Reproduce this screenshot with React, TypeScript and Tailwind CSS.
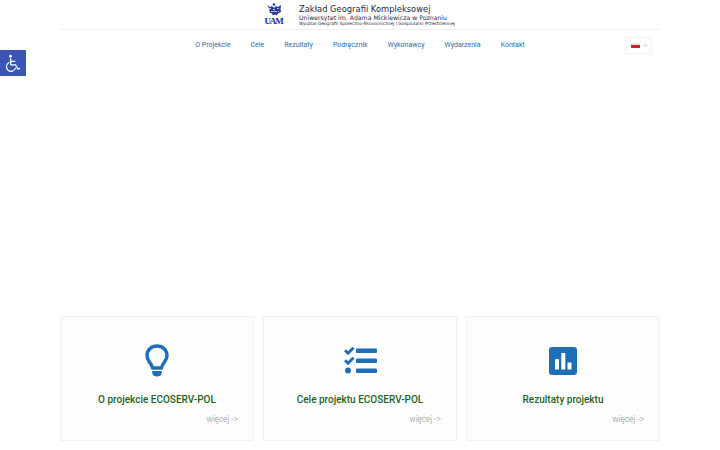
import { ChevronDown } from "lucide-react"

const navItems = ["O Projekcie", "Cele", "Rezultaty", "Podręcznik", "Wykonawcy", "Wydarzenia", "Kontakt"]

function WheelchairIcon() {
  return (
    <svg width="16" height="18" viewBox="0 0 18 20" fill="none" stroke="#fff" strokeWidth="1.400" strokeLinecap="round" strokeLinejoin="round">
      <circle cx="6.200" cy="2.300" r="1.600" fill="#fff" stroke="none" />
      <path d="M6.400 5v7h5.400l2.800 5 2-.9" />
      <path d="M6.400 8.300h4.600" />
      <path d="M4.500 9.500a5.200 5.200 0 1 0 7.300 6.300" />
    </svg>
  )
}

function BulbIcon() {
  return (
    <svg width="24" height="33" viewBox="0 0 24 33" fill="none">
      <path
        d="M12 2C6.200 2 2 6.300 2 11.600c0 2.400.9 4.300 2.200 6 1.500 2 2.800 3.900 3.400 6.400h8.800c.6-2.500 1.900-4.400 3.400-6.400 1.300-1.700 2.200-3.600 2.200-6C22 6.300 17.800 2 12 2z"
        stroke="#1f6fb8"
        strokeWidth="3.400"
        strokeLinejoin="round"
      />
      <path d="M7.200 27h9.600v1.500c0 2.500-2 4-4.800 4s-4.800-1.500-4.800-4z" fill="#1f6fb8" />
    </svg>
  )
}

function ListIcon() {
  return (
    <svg width="33" height="28" viewBox="0 1 33 28" fill="#1f6fb8">
      <path d="M1 4.200l3 3 5.500-5.500" fill="none" stroke="#1f6fb8" strokeWidth="3" />
      <path d="M1 14.200l3 3 5.500-5.500" fill="none" stroke="#1f6fb8" strokeWidth="3" />
      <circle cx="4" cy="24.500" r="3" />
      <rect x="12" y="2.500" width="21" height="4.400" rx="1" />
      <rect x="12" y="12.500" width="21" height="4.400" rx="1" />
      <rect x="12" y="22.500" width="21" height="4.400" rx="1" />
    </svg>
  )
}

function ChartIcon() {
  return (
    <svg width="28" height="28" viewBox="0 0 28 28">
      <rect width="28" height="28" rx="3" fill="#1f6fb8" />
      <rect x="6" y="12" width="4" height="10.500" rx="0.600" fill="#fff" />
      <rect x="12.300" y="6" width="4" height="16.500" rx="0.600" fill="#fff" />
      <rect x="18.500" y="15.500" width="4" height="7" rx="0.600" fill="#fff" />
    </svg>
  )
}

function UamLogo() {
  return (
    <div className="flex w-[17px] flex-col items-center">
      <svg width="16" height="14" viewBox="0 0 16 14">
        <g fill="#2c3a98">
          <circle cx="8" cy="1.500" r="1.300" />
          <path d="M1 2l3 2 2-1 2 2 2-2 2 1 3-2-.5 4 .5 3-3 1.500-1 2-2-1-2 1-1-2-3-1.500.5-3z" />
        </g>
        <g fill="#b7c0e6">
          <rect x="3" y="5" width="2" height="1" />
          <rect x="7" y="6" width="2" height="1" />
          <rect x="11" y="5" width="2" height="1" />
          <rect x="5" y="8" width="6" height="1" />
          <rect x="3" y="8" width="1" height="1" />
          <rect x="12" y="8" width="1" height="1" />
        </g>
      </svg>
      <span className="font-['Liberation_Serif',serif] text-[9px] leading-[9px] font-bold tracking-[-1.200px] text-[#1e2a7c]">UAM</span>
    </div>
  )
}

function Card({ icon, title }: { icon: React.ReactNode; title: string }) {
  return (
    <div className="flex h-[125px] flex-col items-center border border-[#f1f1f1] bg-[#fdfdfd] px-2.5 pt-[27px]">
      <div className="flex h-[33px] items-center justify-center">{icon}</div>
      <h3 className="mt-[15px] text-[10px] leading-[16px] font-medium text-[#1e6424]">{title}</h3>
      <a className="mt-[5px] mr-[5px] self-end text-[8.300px] leading-[13px] font-light text-[#8c8c8c]">więcej -&gt;</a>
    </div>
  )
}

export default function App() {
  return (
    <div className="relative h-[450px] w-[720px] overflow-hidden bg-white font-['Roboto',sans-serif]">
      {/* accessibility toggle */}
      <button className="absolute top-[50px] left-0 flex h-[26px] w-[26px] items-center justify-center bg-[#3a55b4]">
        <WheelchairIcon />
      </button>

      <div className="mx-auto w-[600px]">
        <div className="flex h-[30px] items-center justify-center gap-[17px] border-b border-[#f0f0f0] pl-[1px]">
          <UamLogo />
          <div className="flex w-[157px] flex-col font-['DejaVu_Sans',sans-serif] text-[#1f2a44]">
            <span className="text-[8.350px] leading-[10px] whitespace-nowrap">Zakład Geografii Kompleksowej</span>
            <span className="text-[6.200px] leading-[7px] whitespace-nowrap">Uniwersytet im. Adama Mickiewicza w Poznaniu</span>
            <span className="text-[4.450px] leading-[5px] whitespace-nowrap">Wydział Geografii Społeczno-Ekonomicznej i Gospodarki Przestrzennej</span>
          </div>
        </div>

        <div className="relative flex h-[30px] items-center justify-center pt-[1px]">
          <nav className="flex items-center gap-[20px] text-[7px] text-[#2a6da8]">
            {navItems.map((item) => (
              <a key={item}>{item}</a>
            ))}
          </nav>
          {/* language dropdown */}
          <div className="absolute top-[7px] right-[8px] flex h-[17px] w-[27px] items-center gap-[3px] rounded-[2px] border border-[#f0f0f0] pl-[5px]">
            <div className="h-[5px] w-[9px] bg-gradient-to-b from-[#f3e6e6] from-30% to-[#d5202c] to-30%" />
            <ChevronDown size={5} strokeWidth={3} className="text-[#888]" />
          </div>
        </div>

        <div className="mt-[256px] grid grid-cols-3 gap-[9px]">
          <Card icon={<BulbIcon />} title="O projekcie ECOSERV-POL" />
          <Card icon={<ListIcon />} title="Cele projektu ECOSERV-POL" />
          <Card icon={<ChartIcon />} title="Rezultaty projektu" />
        </div>
      </div>
    </div>
  )
}
